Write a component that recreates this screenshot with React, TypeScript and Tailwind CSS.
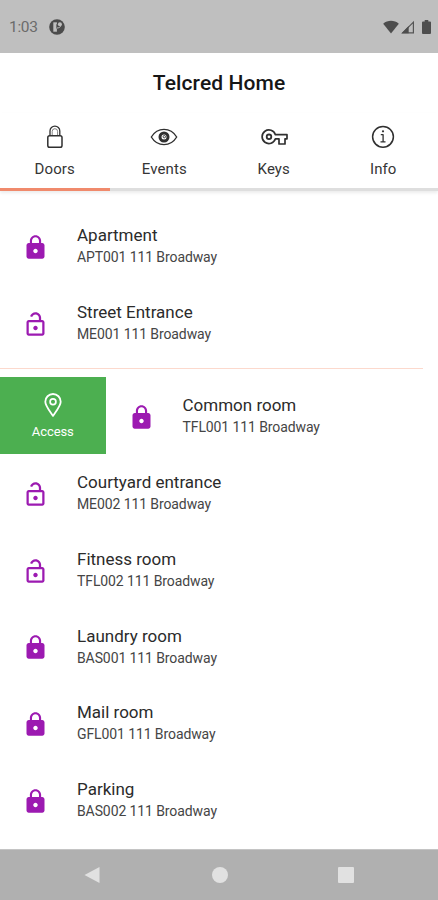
import type { ReactNode } from "react";

type Door = {
  name: string;
  address: string;
  locked: boolean;
};

const favorites: Door[] = [
  { name: "Apartment", address: "APT001 111 Broadway", locked: true },
  { name: "Street Entrance", address: "ME001 111 Broadway", locked: false },
];

const doors: Door[] = [
  { name: "Courtyard entrance", address: "ME002 111 Broadway", locked: false },
  { name: "Fitness room", address: "TFL002 111 Broadway", locked: false },
  { name: "Laundry room", address: "BAS001 111 Broadway", locked: true },
  { name: "Mail room", address: "GFL001 111 Broadway", locked: true },
  { name: "Parking", address: "BAS002 111 Broadway", locked: true },
];

const DoorIcon = ({ locked }: { locked: boolean }) => (
  <svg viewBox="0 0 24 24" className="w-[27px] h-[27px] shrink-0" fill="#9c1ab1">
    {locked ? (
      <path d="M18 8h-1V6c0-2.76-2.24-5-5-5S7 3.24 7 6v2H6c-1.1 0-2 .9-2 2v10c0 1.1.9 2 2 2h12c1.1 0 2-.9 2-2V10c0-1.1-.9-2-2-2zm-6 9c-1.1 0-2-.9-2-2s.9-2 2-2 2 .9 2 2-.9 2-2 2zm3.1-9H8.9V6c0-1.71 1.39-3.1 3.1-3.1s3.1 1.39 3.1 3.1v2z" />
    ) : (
      <path d="M12 17c1.1 0 2-.9 2-2s-.9-2-2-2-2 .9-2 2 .9 2 2 2zm6-9h-1V6c0-2.76-2.24-5-5-5-2.28 0-4.27 1.54-4.84 3.75l1.94.5C9.44 3.93 10.63 3 12 3c1.65 0 3 1.35 3 3v2H6c-1.1 0-2 .9-2 2v10c0 1.1.9 2 2 2h12c1.1 0 2-.9 2-2V10c0-1.1-.9-2-2-2zm0 12H6V10h12v10z" />
    )}
  </svg>
);

const DoorRow = ({ door }: { door: Door }) => (
  <div className="flex h-[76.6px] pl-[22px]">
    <div className="pt-[27px]">
      <DoorIcon locked={door.locked} />
    </div>
    <div className="pl-[28px] pt-[17.3px] whitespace-nowrap">
      <div className="text-[17px] leading-[23px] text-[#2b2b2b]">{door.name}</div>
      <div className="text-[14px] leading-5 tracking-[-0.1px] text-[#454545]">{door.address}</div>
    </div>
  </div>
);

const Tab = ({ label, active, children }: { label: string; active?: boolean; children: ReactNode }) => (
  <div className={`flex flex-1 flex-col items-center border-b-3 ${active ? "border-[#f08a6c]" : "border-[#dedede]"}`}>
    <svg
      viewBox="0 0 28 28"
      className="w-7 h-7 mt-[10px]"
      fill="none"
      stroke="#303030"
      strokeWidth="1.3"
      strokeLinejoin="round"
    >
      {children}
    </svg>
    <span className="mt-2 text-[15px] leading-5 tracking-[0.1px] text-[#363636]">{label}</span>
  </div>
);

const StatusBar = () => (
  <div className="flex h-[53px] shrink-0 items-center bg-[#bfbfbf] pl-[9px] pr-[7px] text-[#6b6b6b]">
    <span className="text-[15.5px] leading-5 tracking-[-0.3px]">1:03</span>
    <svg viewBox="0 0 16 16" className="ml-[11px] w-4 h-4">
      <circle cx="8" cy="8" r="7.8" fill="#4b4b4b" />
      <path d="M4.3 3.3h3.6v9.4H4.3z" fill="#bfbfbf" />
      <path d="M7.9 5.2v4.3" stroke="#4b4b4b" strokeWidth="1" />
      <circle cx="10.9" cy="5.2" r="2" fill="#bfbfbf" />
      <path d="M8 9c1.8 0 3.2-.8 4-2.3" fill="none" stroke="#bfbfbf" />
    </svg>
    <div className="ml-auto flex items-center">
      <svg viewBox="0 0 16 14" className="w-4 h-[14px]" fill="#4d4d4d">
        <path d="M8 13.5.2 3.7C4.7-.1 11.3-.1 15.8 3.7z" />
      </svg>
      <svg viewBox="0 0 14 14" className="ml-[2px] w-[14px] h-[14px]">
        <path d="M1.7 12.8 12.4 2.1v10.7z" fill="none" stroke="#555" strokeWidth="1.2" />
        <path d="M.5 13.3 7.7 6.1v7.2z" fill="#4d4d4d" />
      </svg>
      <svg viewBox="0 0 9 14" className="ml-[7px] w-[9px] h-[14px]" fill="#4d4d4d">
        <path d="M2.7 0h3.6v1.4H8a1 1 0 0 1 1 1V13a1 1 0 0 1-1 1H1a1 1 0 0 1-1-1V2.4a1 1 0 0 1 1-1h1.7z" />
      </svg>
    </div>
  </div>
);

const App = () => {
  return (
    <div className="flex h-[900px] w-[438px] flex-col overflow-hidden bg-white font-['Roboto',sans-serif]">
      <StatusBar />

      <h1 className="h-[60px] shrink-0 text-center text-[21px] leading-[60px] font-medium tracking-[0.1px] text-[#161616]">
        Telcred Home
      </h1>

      <div className="flex h-[78px] shrink-0 shadow-[0_2px_3px_rgba(0,0,0,0.08)]">
        <Tab label="Doors" active>
          <rect x="6.8" y="12.7" width="14.2" height="11.5" rx="1.8" strokeWidth="1.5" />
          <path d="M9 12.7V8a4.9 4.9 0 0 1 9.8 0v4.7" strokeWidth="1.3" />
          <path d="M11.2 12.7V8.4a2.7 2.7 0 0 1 5.4 0v4.3" strokeWidth=".6" />
        </Tab>
        <Tab label="Events">
          <path d="M1.3 14C7.5 3.8 20.5 3.8 26.7 14 20.5 24.2 7.5 24.2 1.3 14z" strokeWidth="1.4" />
          <circle cx="14" cy="14" r="4" strokeWidth="3" />
          <circle cx="14.3" cy="13.7" r="1.2" strokeWidth=".9" />
        </Tab>
        <Tab label="Keys">
          <path d="M15.4 11.7H27v4.1h-2v5.2h-6v-5.2h-3.6a6.8 6.8 0 1 1 0-4.1z" strokeWidth="1.7" />
          <circle cx="9" cy="13.8" r="2.3" strokeWidth="1.8" />
        </Tab>
        <Tab label="Info">
          <circle cx="14" cy="13.8" r="10.4" strokeWidth="1.5" />
          <circle cx="14" cy="8.3" r="1.1" fill="#303030" stroke="none" />
          <path d="M11.8 11.7h2.3v7.2M11.5 18.9h5" strokeWidth="1.3" />
        </Tab>
      </div>

      <div className="flex-1 pt-4">
        {favorites.map((door) => (
          <DoorRow key={door.name} door={door} />
        ))}

        <div className="mt-[8px] mb-[8px] mr-[15px] h-px bg-[#fcd9cd]" />

        <div className="flex">
          <div className="flex h-[77px] w-[105.5px] flex-col items-center bg-[#4caf50] text-white">
            <svg viewBox="0 0 24 24" className="mt-4 w-6 h-6" fill="none" stroke="white" strokeWidth="1.8">
              <path d="M12 22.8C8 17 4.3 12.6 4.3 8.7a7.7 7.7 0 0 1 15.4 0C19.7 12.6 16 17 12 22.8z" />
              <circle cx="12" cy="8.7" r="2.9" strokeWidth="1.7" />
            </svg>
            <span className="mt-[7px] text-[13px] leading-4 tracking-[-0.1px]">Access</span>
          </div>
          <DoorRow door={{ name: "Common room", address: "TFL001 111 Broadway", locked: true }} />
        </div>

        {doors.map((door) => (
          <DoorRow key={door.name} door={door} />
        ))}
      </div>

      <div className="flex h-[51px] shrink-0 items-center justify-between border-t border-[#c4c4c4] bg-[#b0b0b0] pl-[83px] pr-[84px]">
        <svg viewBox="0 0 18 18" className="w-[18px] h-[18px]" fill="#e1e1e1">
          <path d="M16.5 1v16L1.5 9z" />
        </svg>
        <div className="h-4 w-4 rounded-full bg-[#e1e1e1]" />
        <div className="h-4 w-4 rounded-[1px] bg-[#e1e1e1]" />
      </div>
    </div>
  );
};

export default App;
